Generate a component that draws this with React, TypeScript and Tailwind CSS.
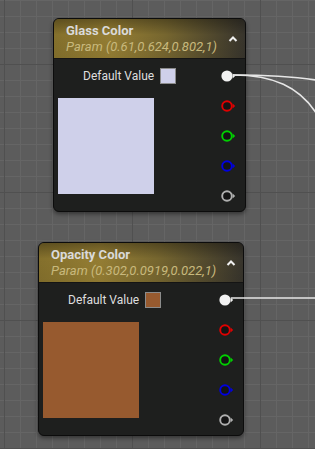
import React from "react";

type NodeProps = {
  title: string;
  param: string;
  color: string;
  pos: string;
};

const pinColors = ["#e00000", "#00d000", "#0000e0", "#b0b0b0"];

function Pin({ color, connected }: { color: string; connected?: boolean }) {
  return (
    <svg width="16" height="12" viewBox="0 0 16 12">
      {connected ? (
        <circle cx="6" cy="6" r="5.6" fill="#f2f2f2" />
      ) : (
        <circle cx="6" cy="6" r="4.8" fill="#141414" stroke={color} strokeWidth="1.9" />
      )}
      <polygon points="11.6,3.6 14.2,6 11.6,8.4" fill={connected ? "#f2f2f2" : color} />
    </svg>
  );
}

function ParamNode({ title, param, color, pos }: NodeProps) {
  return (
    <div
      className={`absolute ${pos} rounded-[6px] border border-[#0c0c0c] bg-[#1e1f1e] shadow-[0_2px_4px_rgba(0,0,0,0.45)] overflow-hidden`}
    >
      <div className="relative h-[40px] border-b border-[#141414] bg-[linear-gradient(to_right,#84702c_0%,#947d33_30%,#76662f_58%,#37342c_100%)] pl-[12px] pt-[4px]">
        <div className="absolute inset-0 bg-[linear-gradient(to_bottom,rgba(0,0,0,0.3)_0%,rgba(0,0,0,0)_40%,rgba(0,0,0,0.04)_100%)]" />
        <div className="relative text-[13px] leading-[16px] font-bold text-[#dadada]">{title}</div>
        <div className="relative text-[13px] leading-[16px] italic text-[#c8b97d]">{param}</div>
        <svg className="absolute right-[7px] top-[16px]" width="10" height="8" viewBox="0 0 10 8">
          <polyline points="1.5,6 5,2.5 8.5,6" fill="none" stroke="#f0f0f0" strokeWidth="2" />
        </svg>
      </div>
      <div className="flex pt-[2px]">
        <div className="flex flex-col pl-[4px]">
          <div className="flex h-[30px] items-center gap-[6px] pl-[25px]">
            <span className="text-[12px] text-[#dedede]">Default Value</span>
            <div className="h-[16px] w-[16px] border border-[#8c8c8c]" style={{ background: color }} />
          </div>
          <div className="mt-[7px] h-[96px] w-[96px]" style={{ background: color }} />
        </div>
        <div className="ml-auto flex flex-col pr-[8px]">
          <div className="flex h-[30px] items-center">
            <Pin color="#f2f2f2" connected />
          </div>
          {pinColors.map((c) => (
            <div key={c} className="flex h-[30px] items-center">
              <Pin color={c} />
            </div>
          ))}
        </div>
      </div>
    </div>
  );
}

export default function App() {
  return (
    <div
      className="relative h-[449px] w-[315px] overflow-hidden bg-[#5c5c5c] bg-[linear-gradient(to_right,#505050_1px,transparent_1px),linear-gradient(to_bottom,#505050_1px,transparent_1px),linear-gradient(to_right,#656565_1px,transparent_1px),linear-gradient(to_bottom,#656565_1px,transparent_1px)] bg-[size:128px_128px,128px_128px,16px_16px,16px_16px] bg-[position:4px_0px,0px_64px,4px_0px,0px_0px]"
      style={{ fontFamily: "Roboto, 'Noto Sans', sans-serif" }}
    >
      <ParamNode
        title="Glass Color"
        param="Param (0.61,0.624,0.802,1)"
        color="#cfd0ea"
        pos="left-[53px] top-[18px] w-[193px]"
      />
      <ParamNode
        title="Opacity Color"
        param="Param (0.302,0.0919,0.022,1)"
        color="#975a2f"
        pos="left-[38px] top-[242px] w-[206px]"
      />
      <svg className="absolute inset-0" width="315" height="449" viewBox="0 0 315 449">
        <path d="M233 75 C 265 75, 290 76, 316 80" fill="none" stroke="#e6e6e6" strokeWidth="1.6" />
        <path d="M233 75 C 272 75, 300 86, 318 116" fill="none" stroke="#e6e6e6" strokeWidth="1.6" />
        <path d="M231 298 L 316 298" fill="none" stroke="#e6e6e6" strokeWidth="1.6" />
      </svg>
    </div>
  );
}
